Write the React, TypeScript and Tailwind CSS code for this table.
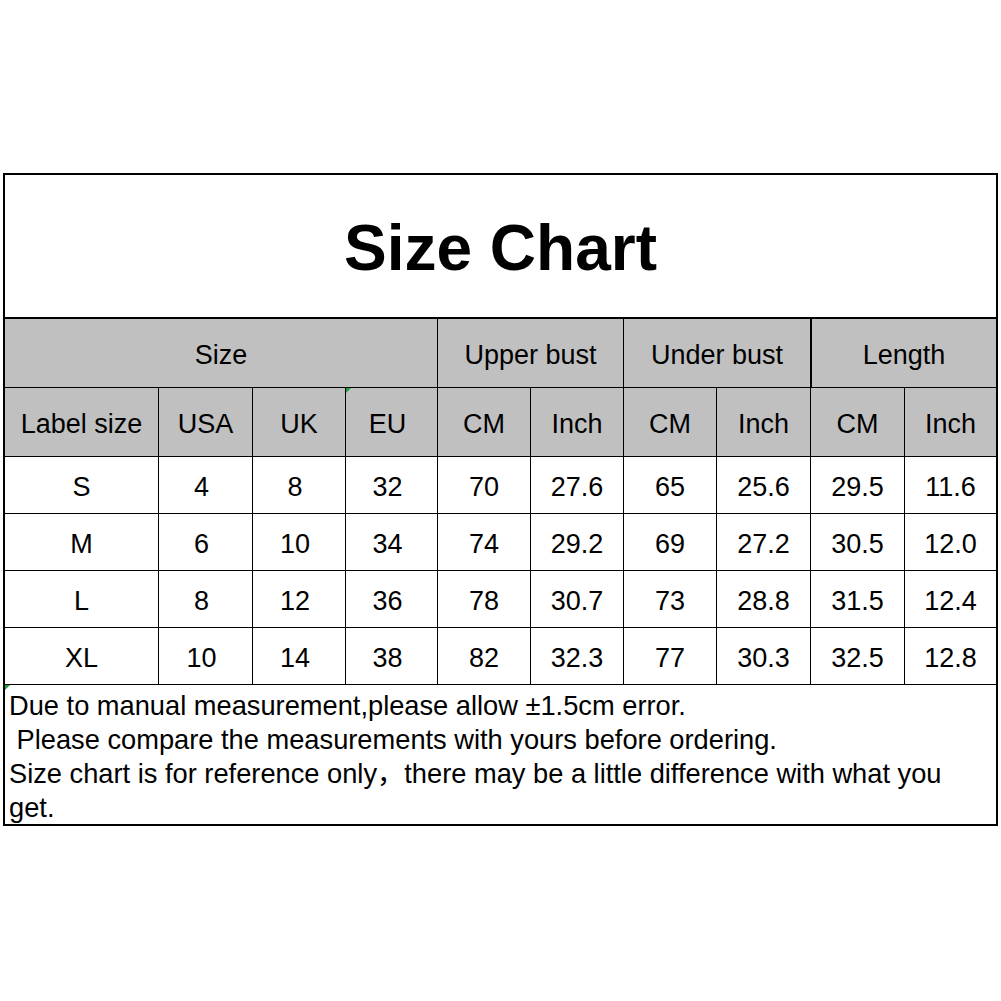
const SUB_HEADERS = ['Label size', 'USA', 'UK', 'EU', 'CM', 'Inch', 'CM', 'Inch', 'CM', 'Inch'];

const ROWS: string[][] = [
  ['S', '4', '8', '32', '70', '27.6', '65', '25.6', '29.5', '11.6'],
  ['M', '6', '10', '34', '74', '29.2', '69', '27.2', '30.5', '12.0'],
  ['L', '8', '12', '36', '78', '30.7', '73', '28.8', '31.5', '12.4'],
  ['XL', '10', '14', '38', '82', '32.3', '77', '30.3', '32.5', '12.8'],
];

const NOTES = [
  'Due to manual measurement,please allow ±1.5cm error.',
  ' Please compare the measurements with yours before ordering.',
  'Size chart is for reference only，there may be a little difference with what you',
  'get.',
];

/** Excel's little green comment marker in a cell corner. */
function Marker() {
  return (
    <span className="absolute left-0 top-0 h-0 w-0 border-l-[5px] border-b-[5px] border-l-[#1f9e3a] border-b-transparent" />
  );
}

export default function App() {
  return (
    <div
      className="min-h-[1001px] w-[1001px] bg-white pt-[173px] text-black"
      style={{ fontFamily: '"Liberation Sans", Arial, "Noto Sans CJK SC", sans-serif' }}
    >
      <div className="ml-[3px] w-[995px] border-2 border-black">
        {/* Title */}
        <div className="flex h-[144px] items-center justify-center border-b-2 border-black">
          <h1 className="pt-[4px] text-[64px] font-bold leading-none">Size Chart</h1>
        </div>

        {/* Chart grid — 1px gaps over black make the cell rules */}
        <div className="grid grid-cols-[153px_93px_92px_91px_92px_92px_92px_93px_93px_1fr] gap-px bg-black text-[27px] leading-none">
          <div className="col-span-4 flex h-[68px] items-center justify-center bg-[#c0c0c0] pt-[4px]">Size</div>
          <div className="col-span-2 flex h-[68px] items-center justify-center bg-[#c0c0c0] pt-[4px]">
            Upper bust
          </div>
          <div className="col-span-2 flex h-[68px] items-center justify-center bg-[#c0c0c0] pt-[4px]">
            Under bust
          </div>
          <div className="col-span-2 flex h-[68px] items-center justify-center border-l border-black bg-[#c0c0c0] pt-[4px]">
            Length
          </div>

          {SUB_HEADERS.map((h, i) => (
            <div
              key={i}
              className={
                i === 3
                  ? 'relative flex h-[68px] items-center justify-center bg-[#c0c0c0] pr-[8px] pt-[4px]'
                  : 'relative flex h-[68px] items-center justify-center bg-[#c0c0c0] pt-[4px]'
              }
            >
              {i === 3 && <Marker />}
              {h}
            </div>
          ))}

          {ROWS.map((row) =>
            row.map((v, i) => (
              <div
                key={`${row[0]}-${i}`}
                className={
                  i >= 1 && i <= 3
                    ? 'flex h-[56px] items-center justify-center bg-white pr-[8px] pt-[4px]'
                    : 'flex h-[56px] items-center justify-center bg-white pt-[4px]'
                }
              >
                {v}
              </div>
            )),
          )}

          {/* Notes */}
          <div className="relative col-span-10 h-[139px] bg-white pl-[4px] pt-[4px] text-[27.25px] leading-[34px]">
            <Marker />
            {NOTES.map((n, i) => (
              <p key={i} className="whitespace-pre">
                {n}
              </p>
            ))}
          </div>
        </div>
      </div>
    </div>
  );
}
